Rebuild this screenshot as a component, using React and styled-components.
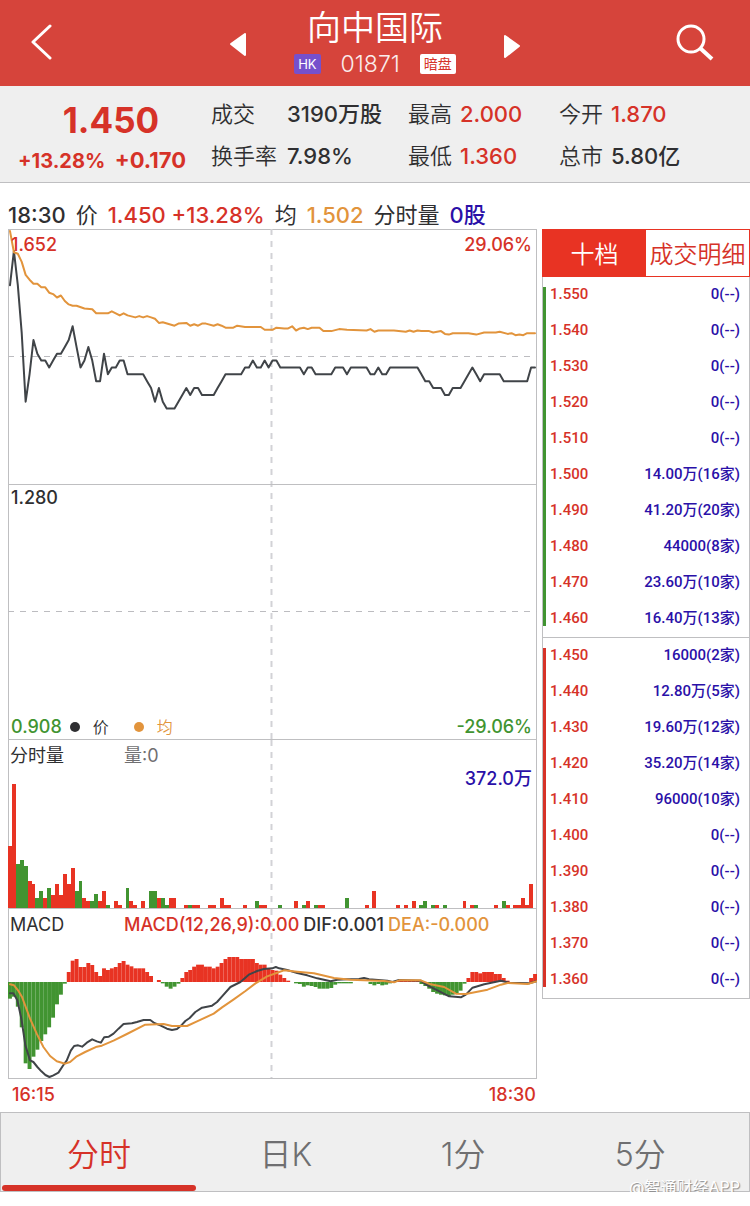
import React from 'react';
import styled, { createGlobalStyle } from 'styled-components';

const COLORS = {
  header: '#d6443b',
  red: '#d63228',
  solidRed: '#e83323',
  green: '#419431',
  orange: '#e2943c',
  blue: '#2a10a8',
  ink: '#2f2f31',
  line: '#404448',
  gray: '#6f6f71',
  panel: '#efefef',
  border: '#bfbfc1',
};

const UI_FONT = `Inter, 'Noto Sans CJK SC', sans-serif`;
const BOOK_FONT = `Roboto, 'Noto Sans CJK SC', sans-serif`;

const GlobalStyle = createGlobalStyle`
  * {
    box-sizing: border-box;
  }

  body {
    margin: 0;
    background: white;
    font-family: ${UI_FONT};
    color: ${COLORS.ink};
  }

  button {
    padding: 0;
    border: none;
    background: none;
    color: inherit;
    font: inherit;
    cursor: pointer;
  }
`;

/* ---------- data ---------- */

const MINUTES = 135;
const HIGH = 1.652;
const LOW = 0.908;

const PRICES = [
  1.57, 1.62, 1.57, 1.5, 1.4, 1.44, 1.49, 1.47, 1.46, 1.46, 1.45, 1.46, 1.47,
  1.47, 1.48, 1.49, 1.51, 1.48, 1.45, 1.46, 1.48, 1.46, 1.43, 1.43, 1.47, 1.44,
  1.45, 1.45, 1.46, 1.46, 1.44, 1.44, 1.44, 1.44, 1.44, 1.43, 1.42, 1.4, 1.42,
  1.4, 1.39, 1.39, 1.39, 1.4, 1.41, 1.42, 1.41, 1.42, 1.42, 1.41, 1.41, 1.41,
  1.41, 1.42, 1.43, 1.44, 1.44, 1.44, 1.44, 1.44, 1.45, 1.45, 1.46, 1.45, 1.45,
  1.46, 1.45, 1.46, 1.46, 1.45, 1.45, 1.45, 1.45, 1.45, 1.45, 1.44, 1.45, 1.45,
  1.44, 1.44, 1.44, 1.44, 1.44, 1.45, 1.45, 1.45, 1.44, 1.45, 1.45, 1.45, 1.45,
  1.45, 1.44, 1.44, 1.45, 1.44, 1.44, 1.45, 1.45, 1.45, 1.45, 1.45, 1.45, 1.45,
  1.45, 1.44, 1.43, 1.43, 1.42, 1.42, 1.42, 1.41, 1.41, 1.42, 1.42, 1.42, 1.43,
  1.44, 1.45, 1.44, 1.43, 1.44, 1.44, 1.44, 1.44, 1.44, 1.43, 1.43, 1.43, 1.43,
  1.43, 1.43, 1.43, 1.45, 1.45,
].map((price, minute) => [minute, price]);

const AVERAGES = [
  [0, 1.649], [1, 1.618], [2, 1.616], [3, 1.604], [4, 1.585], [5, 1.578],
  [6, 1.572], [7, 1.572], [8, 1.567], [9, 1.567], [10, 1.559], [11, 1.557],
  [12, 1.552], [13, 1.555], [14, 1.547], [15, 1.542], [16, 1.54], [17, 1.54],
  [19, 1.536], [21, 1.535], [22, 1.529], [25, 1.529], [26, 1.532], [27, 1.529],
  [28, 1.526], [29, 1.529], [30, 1.526], [32, 1.523], [33, 1.525], [34, 1.523],
  [35, 1.525], [36, 1.523], [37, 1.521], [38, 1.515], [39, 1.516], [42, 1.511],
  [43, 1.514], [45, 1.515], [46, 1.511], [47, 1.513], [48, 1.511], [49, 1.514],
  [50, 1.514], [52, 1.511], [53, 1.513], [54, 1.511], [55, 1.508], [57, 1.508],
  [58, 1.511], [60, 1.509], [64, 1.509], [65, 1.505], [67, 1.505], [68, 1.508],
  [70, 1.507], [71, 1.507], [72, 1.51], [73, 1.504], [74, 1.507], [75, 1.508],
  [76, 1.506], [77, 1.508], [79, 1.508], [80, 1.503], [82, 1.503], [84, 1.506],
  [86, 1.505], [91, 1.504], [92, 1.506], [93, 1.502], [94, 1.504], [98, 1.504],
  [101, 1.502], [102, 1.504], [103, 1.502], [104, 1.504], [105, 1.503],
  [107, 1.503], [108, 1.501], [110, 1.503], [111, 1.499], [112, 1.498],
  [113, 1.5], [117, 1.5], [119, 1.498], [121, 1.501], [124, 1.501],
  [125, 1.502], [127, 1.499], [128, 1.5], [129, 1.497], [130, 1.498],
  [131, 1.497], [132, 1.5], [134, 1.5],
];

// [minute, volume in 万]; a negative volume is a falling minute
const VOLUMES = [
  [0, 186], [1, 372], [2, -132], [3, -144], [4, -126], [5, 81], [6, 71],
  [7, -30], [8, -51], [9, 30], [10, -60], [11, 40], [12, 71], [13, 40],
  [14, 102], [15, 71], [16, 120], [17, -51], [18, -81], [19, 30], [20, 20],
  [21, -20], [22, -41], [23, 20], [24, 51], [25, -10], [27, 20], [28, 10],
  [30, -60], [31, 20], [32, 10], [34, 20], [36, -51], [37, -51], [38, 30],
  [39, -30], [40, -10], [41, 30], [42, 30], [45, 10], [46, -10], [47, 10],
  [48, 10], [51, 10], [52, 10], [54, 30], [55, 10], [56, 10], [60, 10],
  [63, -20], [64, 10], [65, 10], [69, -10], [73, 20], [75, -10], [76, 20],
  [78, -10], [79, 10], [80, 10], [86, -30], [91, 10], [93, 51], [99, 10],
  [101, 10], [103, 20], [105, -10], [106, -20], [108, -10], [109, 10],
  [111, -10], [116, 20], [118, 10], [119, -10], [124, 10], [126, -20],
  [127, 10], [129, 10], [130, 10], [131, 30], [132, 10], [133, 71],
];

const MACD_BARS = [
  -50, -44, -74, -136, -244, -261, -224, -203, -177, -157, -136, -107, -67, -38,
  -5, 30, 64, 69, 45, 45, 57, 51, 30, 18, 41, 36, 41, 45, 57, 63, 52, 47, 41,
  41, 41, 30, 18, 0, 6, -4, -14, -20, -14, -5, 12, 30, 36, 46, 52, 52, 46, 46,
  41, 46, 57, 69, 75, 75, 75, 69, 69, 69, 69, 57, 52, 52, 40, 36, 34, 22, 12, 4,
  0, -4, -6, -14, -10, -12, -15, -20, -20, -20, -18, -8, -4, -4, -4, -4, 0, 0,
  0, 0, -6, -10, -6, -10, -8, -4, 0, 6, 6, 6, 6, 6, 6, -6, -12, -20, -30, -35,
  -38, -40, -42, -38, -34, -26, -5, 12, 30, 30, 26, 30, 30, 30, 24, 24, 12, 4,
  0, 0, 0, 0, 0, 12, 24,
];

// both in the units of the MACD chart's viewBox
const DIF = `6,253 16,253 28,274 40,329 52,409 66,454 76,459 88,474 100,487 112,498
  124,504 136,499 151,491 164,471 176,454 188,425 198,411 210,409 222,413 236,401
  252,391 266,397 278,401 288,385 302,383 316,374 331,359 346,345 371,343 386,339
  406,333 426,333 438,342 456,349 476,359 491,363 506,360 521,347 531,336 544,327
  561,309 581,296 611,290 626,279 641,262 666,234 696,219 721,197 746,186 766,180
  791,178 802,174 812,178 836,183 866,192 896,199 926,208 966,217 986,212 1016,211
  1051,210 1066,207 1081,211 1136,215 1151,219 1171,213 1236,215 1256,229 1286,244
  1321,262 1356,265 1371,257 1391,236 1426,226 1476,215 1501,221 1561,223 1582,217`;

const DEA = `6,226 18,229 30,244 42,264 66,329 86,374 106,414 126,441 146,457 171,464
  186,459 206,442 231,429 266,413 281,410 316,395 356,375 411,347 466,345 491,351
  536,351 566,337 616,314 641,295 676,271 711,246 741,223 776,202 804,192 826,184
  866,188 916,193 976,207 1026,212 1126,216 1156,220 1171,214 1236,214 1266,226
  1306,234 1341,254 1371,255 1436,242 1476,227 1496,222 1556,225 1582,217`;

const STATS = [
  ['成交', '3190万股'],
  ['最高', '2.000', true],
  ['今开', '1.870', true],
  ['换手率', '7.98%'],
  ['最低', '1.360', true],
  ['总市', '5.80亿'],
];

const ASKS = [
  ['1.550', '0(--)'],
  ['1.540', '0(--)'],
  ['1.530', '0(--)'],
  ['1.520', '0(--)'],
  ['1.510', '0(--)'],
  ['1.500', '14.00万(16家)'],
  ['1.490', '41.20万(20家)'],
  ['1.480', '44000(8家)'],
  ['1.470', '23.60万(10家)'],
  ['1.460', '16.40万(13家)'],
];

const BIDS = [
  ['1.450', '16000(2家)'],
  ['1.440', '12.80万(5家)'],
  ['1.430', '19.60万(12家)'],
  ['1.420', '35.20万(14家)'],
  ['1.410', '96000(10家)'],
  ['1.400', '0(--)'],
  ['1.390', '0(--)'],
  ['1.380', '0(--)'],
  ['1.370', '0(--)'],
  ['1.360', '0(--)'],
];

const PERIODS = ['分时', '日K', '1分', '5分'];

/* ---------- header ---------- */

const Header = styled.header`
  display: grid;
  grid-template-columns: 1fr auto 1fr;
  align-items: center;
  height: 86px;
  padding: 0 28px;
  background: ${COLORS.header};
  color: white;
`;

const IconButton = styled.button`
  display: flex;
  justify-self: ${({ $align }) => $align || 'start'};
`;

const Switcher = styled.div`
  display: flex;
  align-items: center;
  gap: 38px;
`;

const Title = styled.div`
  display: flex;
  flex-direction: column;
  align-items: center;
  width: 180px;
  padding-bottom: 3px;
`;

const Name = styled.h1`
  margin: 0;
  font-size: 34px;
  line-height: 44px;
  font-weight: 350;
`;

const CodeRow = styled.div`
  display: flex;
  align-items: center;
  gap: 20px;
  height: 28px;
`;

const Code = styled.span`
  font-size: 23px;
  font-weight: 350;
  opacity: 0.9;
`;

const Tag = styled.span`
  padding: 0 4px;
  border-radius: 2px;
  background: ${({ $light }) => ($light ? 'white' : '#7650cc')};
  color: ${({ $light }) => ($light ? COLORS.red : 'white')};
  font-size: ${({ $light }) => ($light ? 14 : 13)}px;
  line-height: 20px;
`;

/* ---------- quote summary ---------- */

const Summary = styled.section`
  display: flex;
  height: 97px;
  background: ${COLORS.panel};
  border-bottom: 1px solid ${COLORS.border};
`;

const Quote = styled.div`
  width: 204px;
  padding: 13px 18px 0;
  color: ${COLORS.red};
  font-weight: 700;
`;

const LastPrice = styled.div`
  padding-left: 18px;
  text-align: center;
  font-size: 35px;
  line-height: 42px;
`;

const Change = styled.div`
  display: flex;
  justify-content: space-between;
  align-items: baseline;
  font-size: 20px;
  line-height: 38px;
  white-space: nowrap;
`;

const ChangeAmount = styled.span`
  font-size: 22px;
`;

const Stats = styled.dl`
  flex: 1;
  display: grid;
  grid-template-columns: 197fr 151fr 191fr;
  grid-auto-rows: 42px;
  align-content: start;
  margin: 0;
  padding: 7px 0 0 7px;
  font-size: 22px;
  line-height: 42px;
`;

const Stat = styled.div`
  display: flex;
  gap: 8px;
  white-space: nowrap;

  &:nth-child(3n + 1) dt {
    width: 68px;
  }
`;

const StatLabel = styled.dt`
  font-weight: 350;
`;

const StatValue = styled.dd`
  margin: 0;
  color: ${({ $red }) => ($red ? COLORS.red : COLORS.ink)};
  font-weight: 450;
`;

/* ---------- charts ---------- */

const Main = styled.main`
  display: grid;
  grid-template-columns: minmax(0, 1fr) 208px;
  column-gap: 5px;
  padding-left: 8px;
`;

const Reading = styled.div`
  grid-column: 1 / -1;
  display: flex;
  align-items: flex-end;
  gap: 10px;
  height: 46px;
  font-size: 22px;
  line-height: 27px;
  white-space: nowrap;
`;

const Colored = styled.span`
  color: ${({ $color }) => $color};
  font-weight: ${({ $weight }) => $weight};
`;

const Charts = styled.div`
  box-shadow: inset 0 0 0 1px ${COLORS.border};
`;

const Panel = styled.section`
  position: relative;
  height: ${({ $height }) => $height}px;
  border-bottom: 1px solid ${COLORS.border};
`;

const Plot = styled.svg`
  display: block;
  width: 100%;
  height: 100%;
`;

const Corner = styled.div`
  position: absolute;
  left: ${({ $right }) => ($right ? 'auto' : '3px')};
  right: ${({ $right }) => ($right ? '5px' : 'auto')};
  top: ${({ $top }) => $top};
  bottom: ${({ $bottom }) => $bottom};
  display: flex;
  align-items: center;
  color: ${({ $color }) => $color};
  font-size: 18px;
  font-weight: 450;
  line-height: 24px;
  white-space: nowrap;
`;

const Legend = styled.span`
  display: flex;
  align-items: center;
  gap: 13px;
  margin-left: ${({ $gap }) => $gap}px;
  color: ${({ $color }) => $color};
  font-size: 16px;
  font-weight: 350;

  &::before {
    content: '';
    width: 10px;
    height: 10px;
    border-radius: 50%;
    background: currentColor;
  }
`;

const PanelHead = styled.div`
  position: absolute;
  left: 2px;
  top: 3px;
  display: flex;
  gap: 4px;
  font-size: 18px;
  line-height: 25px;
  white-space: nowrap;
`;

const PanelTitle = styled.span`
  width: 110px;
`;

const TimeAxis = styled.div`
  display: flex;
  justify-content: space-between;
  padding: 4px 1px 5px 4px;
  color: ${COLORS.red};
  font-size: 18px;
  font-weight: 500;
  line-height: 24px;
`;

/* ---------- order book ---------- */

const Book = styled.aside`
  align-self: start;
`;

const BookTabs = styled.div`
  display: grid;
  grid-template-columns: 1fr 1fr;
  height: 48px;
  border: 1px solid ${COLORS.solidRed};
`;

const BookTab = styled.button`
  padding-bottom: 2px;
  background: ${({ $active }) => ($active ? COLORS.solidRed : 'white')};
  color: ${({ $active }) => ($active ? 'white' : COLORS.red)};
  font-size: 24px;
  font-weight: 350;
  white-space: nowrap;
`;

const Levels = styled.table`
  width: 100%;
  border: 1px solid ${COLORS.border};
  border-top: ${({ $divided }) => ($divided ? `1px solid ${COLORS.border}` : 'none')};
  border-bottom: ${({ $divided }) => ($divided ? `1px solid ${COLORS.border}` : 'none')};
  border-spacing: 0;
  background: linear-gradient(${({ $color }) => $color}, ${({ $color }) => $color})
    0 10px / 3px calc(100% - 21px) no-repeat;
  font-family: ${BOOK_FONT};
  font-size: 15px;
  font-weight: 500;
  line-height: 34px;
`;

const PriceCell = styled.td`
  height: 36px;
  padding: 0 0 2px 7px;
  color: ${COLORS.red};
`;

const SizeCell = styled.td`
  height: 36px;
  padding: 0 9px 2px 0;
  color: ${COLORS.blue};
  text-align: right;
`;

/* ---------- footer ---------- */

const Footer = styled.nav`
  position: relative;
  display: grid;
  grid-template-columns: 196fr 177fr 177fr 177fr 20fr;
  height: 80px;
  border: 1px solid ${COLORS.border};
  background: ${COLORS.panel};
`;

const PeriodTab = styled.button`
  position: relative;
  color: ${({ $active }) => ($active ? COLORS.red : COLORS.gray)};
  font-size: 32px;
  font-weight: 350;

  &::after {
    content: '';
    position: absolute;
    right: 1px;
    bottom: 0;
    left: 1px;
    height: 6px;
    border-radius: 3px;
    background: ${({ $active }) => ($active ? COLORS.red : 'transparent')};
  }
`;

const Watermark = styled.span`
  position: absolute;
  right: 9px;
  bottom: -8px;
  color: white;
  font-size: 16px;
  line-height: 24px;
  text-shadow: 1px 1px 1px #888;
`;

/* ---------- helpers ---------- */

const STEP = 528 / MINUTES;

const toPoints = (series) =>
  series
    .map(([minute, price]) => {
      const x = (minute + 0.5) * STEP;
      const y = ((HIGH - price) / (HIGH - LOW)) * 510;
      return `${x.toFixed(1)},${y.toFixed(1)}`;
    })
    .join(' ');

const Line = ({ points, color }) => (
  <polyline
    points={points}
    fill="none"
    stroke={color}
    strokeWidth="2"
    strokeLinejoin="round"
    strokeLinecap="round"
    vectorEffect="non-scaling-stroke"
  />
);

const Dashed = (props) => (
  <line
    stroke="#bcbcc0"
    strokeWidth="1"
    strokeDasharray="6 6"
    vectorEffect="non-scaling-stroke"
    {...props}
  />
);

const Midline = (props) => <Dashed stroke="#d2d2d6" strokeWidth="2" y1="0" {...props} />;

const PriceChart = () => (
  <Panel $height={511}>
    <Plot viewBox="0 0 528 510" preserveAspectRatio="none" aria-label="分时价格">
      <Midline x1="263" x2="263" y2="510" />
      <Dashed x1="0" x2="528" y1="127.5" y2="127.5" />
      <Dashed x1="0" x2="528" y1="382.5" y2="382.5" />
      <line x1="0" x2="528" y1="255.5" y2="255.5" stroke={COLORS.border} />
      <Line points={toPoints(PRICES)} color={COLORS.line} />
      <Line points={toPoints(AVERAGES)} color={COLORS.orange} />
    </Plot>
    <Corner $color={COLORS.red} $top="4px">1.652</Corner>
    <Corner $color={COLORS.red} $top="4px" $right>29.06%</Corner>
    <Corner $color={COLORS.ink} $top="257px">1.280</Corner>
    <Corner $color={COLORS.green} $bottom="0">
      0.908
      <Legend $color={COLORS.ink} $gap={8}>价</Legend>
      <Legend $color={COLORS.orange} $gap={25}>均</Legend>
    </Corner>
    <Corner $color={COLORS.green} $bottom="0" $right>-29.06%</Corner>
  </Panel>
);

const VolumeChart = () => (
  <Panel $height={169}>
    <Plot viewBox="0 0 528 168" preserveAspectRatio="none" aria-label="分时量">
      <Midline x1="263" x2="263" y2="168" />
      {VOLUMES.map(([minute, volume]) => (
        <rect
          key={minute}
          x={minute * STEP}
          y={168 - Math.abs(volume) / 3}
          width={STEP}
          height={Math.abs(volume) / 3}
          fill={volume > 0 ? COLORS.solidRed : COLORS.green}
          shapeRendering="crispEdges"
        />
      ))}
    </Plot>
    <PanelHead>
      <PanelTitle>分时量</PanelTitle>
      <Colored $color={COLORS.gray}>量:0</Colored>
    </PanelHead>
    <Corner $color={COLORS.blue} $top="27px" $right>372.0万</Corner>
  </Panel>
);

const MacdChart = () => (
  <Panel $height={170}>
    <Plot viewBox="0 0 1584 507" preserveAspectRatio="none" aria-label="MACD">
      <Midline x1="789" x2="789" y2="507" />
      {MACD_BARS.map((bar, minute) => (
        <rect
          key={minute}
          x={minute * STEP * 3}
          y={bar > 0 ? 219 - bar : 219}
          width={STEP * 3}
          height={Math.abs(bar)}
          fill={bar > 0 ? COLORS.solidRed : COLORS.green}
        />
      ))}
      <Line points={DIF} color={COLORS.line} />
      <Line points={DEA} color={COLORS.orange} />
    </Plot>
    <PanelHead>
      <PanelTitle>MACD</PanelTitle>
      <Colored $color={COLORS.red} $weight={500}>MACD(12,26,9):0.00</Colored>
      <Colored $weight={450}>DIF:0.001</Colored>
      <Colored $color={COLORS.orange} $weight={500}>DEA:-0.000</Colored>
    </PanelHead>
  </Panel>
);

const LevelTable = ({ label, rows, color, divided }) => (
  <Levels aria-label={label} $color={color} $divided={divided}>
    <tbody>
      {rows.map(([price, size]) => (
        <tr key={price}>
          <PriceCell>{price}</PriceCell>
          <SizeCell>{size}</SizeCell>
        </tr>
      ))}
    </tbody>
  </Levels>
);

const App = () => (
  <>
    <GlobalStyle />
    <Header>
      <IconButton aria-label="返回">
        <svg width="26" height="38" viewBox="0 0 26 38">
          <path d="M22 2 L5 18 L22 34" fill="none" stroke="white" strokeWidth="3" strokeLinecap="round" strokeLinejoin="round" />
        </svg>
      </IconButton>
      <Switcher>
        <IconButton aria-label="上一只">
          <svg width="18" height="30" viewBox="0 0 18 30">
            <path d="M16 6 L2 16 L16 27 Z" fill="white" stroke="white" strokeWidth="2" strokeLinejoin="round" />
          </svg>
        </IconButton>
        <Title>
          <Name>向中国际</Name>
          <CodeRow>
            <Tag>HK</Tag>
            <Code>01871</Code>
            <Tag $light>暗盘</Tag>
          </CodeRow>
        </Title>
        <IconButton aria-label="下一只">
          <svg width="18" height="30" viewBox="0 0 18 30">
            <path d="M2 8 L16 18 L2 29 Z" fill="white" stroke="white" strokeWidth="2" strokeLinejoin="round" />
          </svg>
        </IconButton>
      </Switcher>
      <IconButton aria-label="搜索" $align="end">
        <svg width="46" height="38" viewBox="0 0 46 38">
          <circle cx="15" cy="15" r="13" fill="none" stroke="white" strokeWidth="3" />
          <path d="M24 24 L36 35" stroke="white" strokeWidth="4" />
        </svg>
      </IconButton>
    </Header>

    <Summary>
      <Quote>
        <LastPrice>1.450</LastPrice>
        <Change>
          <span>+13.28%</span>
          <ChangeAmount>+0.170</ChangeAmount>
        </Change>
      </Quote>
      <Stats>
        {STATS.map(([label, value, red]) => (
          <Stat key={label}>
            <StatLabel>{label}</StatLabel>
            <StatValue $red={red}>{value}</StatValue>
          </Stat>
        ))}
      </Stats>
    </Summary>

    <Main>
      <Reading>
        <Colored $weight={450}>18:30</Colored>
        <span>价</span>
        <Colored $color={COLORS.red} $weight={500}>1.450 +13.28%</Colored>
        <span>均</span>
        <Colored $color={COLORS.orange} $weight={450}>1.502</Colored>
        <span>分时量</span>
        <Colored $color={COLORS.blue} $weight={450}>0股</Colored>
      </Reading>
      <div>
        <Charts>
          <PriceChart />
          <VolumeChart />
          <MacdChart />
        </Charts>
        <TimeAxis>
          <span>16:15</span>
          <span>18:30</span>
        </TimeAxis>
      </div>
      <Book>
        <BookTabs>
          <BookTab $active>十档</BookTab>
          <BookTab>成交明细</BookTab>
        </BookTabs>
        <LevelTable label="卖盘" rows={ASKS} color={COLORS.green} />
        <LevelTable label="买盘" rows={BIDS} color={COLORS.red} divided />
      </Book>
    </Main>

    <Footer>
      {PERIODS.map((period, index) => (
        <PeriodTab key={period} $active={index === 0}>
          {period}
        </PeriodTab>
      ))}
      <Watermark>@智通财经APP</Watermark>
    </Footer>
  </>
);

export default App;
